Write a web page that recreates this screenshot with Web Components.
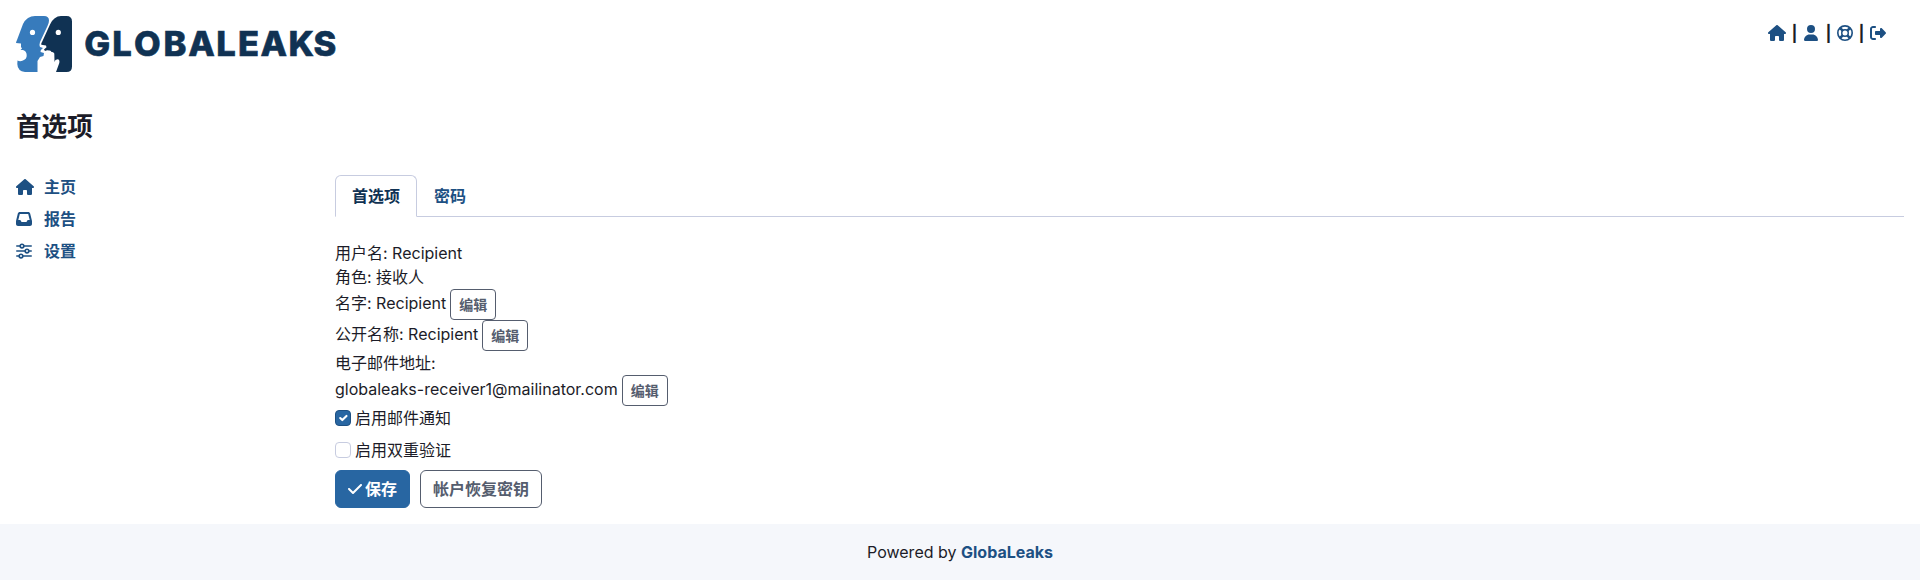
<!DOCTYPE html>
<html lang="zh-CN">
<head>
<meta charset="utf-8">
<title>GlobaLeaks</title>
<style>
html,body{margin:0;background:#fff}
body{font:400 16px/24px Inter,"Noto Sans CJK SC",sans-serif;color:#1c1c28}
</style>
</head>
<body>
<gl-app></gl-app>
<script>
const define=(name,html)=>customElements.define(name,class extends HTMLElement{
  connectedCallback(){
    if(this.shadowRoot)return;
    const t=document.createElement('template');
    t.innerHTML=typeof html==='function'?html(this):html;
    this.attachShadow({mode:'open'}).append(t.content.cloneNode(true));
  }
});
const ICONS={
 home:['0 0 576 512','<path d="M575.8 255.5c0 18-15 32.1-32 32.1h-32l.7 160.2c0 2.7-.2 5.4-.5 8.1V472c0 22.1-17.9 40-40 40H456c-1.1 0-2.2 0-3.3-.1c-1.4 .1-2.8 .1-4.2 .1H416 392c-22.1 0-40-17.9-40-40V448 384c0-17.7-14.3-32-32-32H256c-17.7 0-32 14.3-32 32v64 24c0 22.1-17.9 40-40 40H160 128.1c-1.5 0-3-.1-4.5-.2c-1.2 .1-2.4 .2-3.6 .2H104c-22.1 0-40-17.9-40-40V360c0-.9 0-1.9 .1-2.8V287.6H32c-18 0-32-14-32-32.1c0-9 3-17 10-24L266.4 8c7-7 15-8 22-8s15 2 21 7L564.8 231.5c8 7 12 15 11 24z"/>'],
 user:['0 0 448 512','<path d="M224 256A128 128 0 1 0 224 0a128 128 0 1 0 0 256zm-45.7 48C79.8 304 0 383.8 0 482.3C0 498.7 13.3 512 29.7 512H418.3c16.4 0 29.7-13.3 29.7-29.7C448 383.8 368.2 304 269.7 304H178.3z"/>'],
 help:['0 0 512 512','<g fill="none" stroke="currentColor"><circle cx="256" cy="256" r="230" stroke-width="52"/><circle cx="256" cy="256" r="104" stroke-width="48"/><path d="M100 100L182 182M412 100L330 182M100 412L182 330M412 412L330 330" stroke-width="84"/></g>'],
 exit:['0 0 512 512','<path d="M377.9 105.9L500.7 228.7c7.2 7.2 11.3 17.1 11.3 27.3s-4.1 20.1-11.3 27.3L377.9 406.1c-6.4 6.4-15 9.9-24 9.9c-18.7 0-33.9-15.2-33.9-33.9l0-62.1-128 0c-17.7 0-32-14.3-32-32l0-64c0-17.7 14.3-32 32-32l128 0 0-62.1c0-18.7 15.2-33.9 33.9-33.9c9 0 17.6 3.6 24 9.9zM160 96L96 96c-17.7 0-32 14.3-32 32l0 256c0 17.7 14.3 32 32 32l64 0c17.7 0 32 14.3 32 32s-14.3 32-32 32l-64 0c-53 0-96-43-96-96L0 128C0 75 43 32 96 32l64 0c17.7 0 32 14.3 32 32s-14.3 32-32 32z"/>'],
 inbox:['0 0 512 512','<path d="M121 32C91.6 32 66 52 58.9 80.5L1.9 308.4C.6 313.5 0 318.7 0 323.9V416c0 35.3 28.7 64 64 64H448c35.3 0 64-28.7 64-64V323.9c0-5.2-.6-10.4-1.9-15.5l-57-227.9C446 52 420.4 32 391 32H121zm0 64H391l48 192H387.8c-12.1 0-23.2 6.8-28.6 17.7l-14.3 28.6c-5.4 10.8-16.5 17.7-28.6 17.7H195.8c-12.1 0-23.2-6.8-28.6-17.7l-14.3-28.6c-5.4-10.8-16.5-17.7-28.6-17.7H73L121 96z"/>'],
 sliders:['0 0 512 512','<g fill="none" stroke="currentColor" stroke-width="52" stroke-linecap="round"><path d="M26 96H130M254 96H486M26 256H290M414 256H486M26 416H98M222 416H486"/><circle cx="192" cy="96" r="58"/><circle cx="352" cy="256" r="58"/><circle cx="160" cy="416" r="58"/></g>'],
 check:['0 0 448 512','<path d="M438.6 105.4c12.5 12.5 12.5 32.8 0 45.3l-256 256c-12.5 12.5-32.8 12.5-45.3 0l-128-128c-12.5-12.5-12.5-32.8 0-45.3s32.8-12.5 45.3 0L160 338.7 393.4 105.4c12.5-12.5 32.8-12.5 45.3 0z"/>']
};
define('gl-icon',el=>{
  const [vb,body]=ICONS[el.getAttribute('name')];
  return `<style>:host{display:inline-flex;flex:none}svg{height:16px;width:${vb.split(' ')[2]/32}px;fill:currentColor;display:block}</style><svg viewBox="${vb}">${body}</svg>`;
});
define('gl-logo',`<style>:host{display:block;width:330px;height:56px}svg{display:block}text{font:800 34.5px Inter,sans-serif;fill:#103253;stroke:#103253;stroke-width:.6}</style>
<svg width="330" height="56" viewBox="0 0 330 56">
<path fill="#377bbc" d="M19 0H28Q33 0 33 4.500Q33 7 31.500 10L24 26Q23 29 24 31L27 32Q24 34 24.500 36L28 37L27.500 40L24 41L21.500 45V56H9Q1.500 55 1.300 48L1.500 44.500Q4 46 7 44.500Q11 43 10.700 39Q10.500 35 7 34H4.500L6 32.500L5 31V27.500L0 27Q0 26 1 24L7 8Q11 0 19 0Z"/>
<path fill="#103253" d="M45 0H50.500Q56 0 56 5.500V50.500Q56 56 50.500 56H40L43.300 47Q44 43.500 41.500 43.300Q39 43.500 38.500 46L38.300 37.500Q37.500 35.500 35.500 36Q35 34 33 34.500Q31 34 29 35L28 33.500L30.500 31.300L30 29.500L25.300 28.800Q25 27 26 26L34 8.500Q38 0 45 0Z"/>
<circle cx="16.500" cy="16.400" r="2.600" fill="#fff"/><circle cx="42.300" cy="16.400" r="2.600" fill="#fff"/>
<text x="68.300 96.200 118 147.400 172.200 200.200 222 244.600 272.400 297.400" y="40.100">GLOBALEAKS</text>
</svg>`);
define('gl-header',`<style>:host{display:flex;justify-content:space-between;align-items:flex-start;padding:16px 34px 0 16px}
nav{display:flex;align-items:center;height:24px;margin-top:5px;color:#1d5083}
::slotted([name=user]){margin:0 2px 0 1px}</style>
<gl-logo></gl-logo><nav><slot></slot></nav>`);
define('gl-sep',`<style>:host{display:block;width:17px;text-align:center;color:#1c1c28;font-weight:700}</style><slot></slot>`);
define('gl-nav-item',el=>`<style>:host{display:flex;align-items:center;height:32px;color:#1d5083;font-weight:600}gl-icon{width:28px}</style><gl-icon name="${el.getAttribute('icon')}"></gl-icon><slot></slot>`);
define('gl-tab',`<style>:host{display:block;box-sizing:border-box;height:42px;padding:8px 16px;border:1px solid transparent;border-radius:6px 6px 0 0;font-weight:600;color:#1d5083;margin-bottom:-1px}
:host([active]){color:#103253;background:#fff;border-color:#c7cce0 #c7cce0 #fff}</style><slot></slot>`);
define('gl-tabs',`<style>:host{display:flex;border-bottom:1px solid #c7cce0}</style><slot></slot>`);
define('gl-button',`<style>:host{display:inline-flex;align-items:center;box-sizing:border-box;height:38px;padding:0 12px;border:1px solid #555d6e;border-radius:6px;color:#555d6e;font-weight:600;line-height:24px;background:#fff;white-space:nowrap}
:host([small]){height:31px;padding:0 8px;font-size:14px;border-radius:4px;margin-left:4px}
:host([primary]){background:#2866a2;border-color:#2866a2;color:#fff}
::slotted(gl-icon){margin-right:3px}</style><slot></slot>`);
define('gl-row',`<style>:host{display:flex;align-items:flex-start;height:24px;white-space:pre}:host([tall]){height:31px;line-height:28px}</style><slot></slot>`);
define('gl-check',`<style>:host{display:flex;align-items:center;height:32px}span{box-sizing:border-box;width:16px;height:16px;border:1px solid #c7cce0;border-radius:4px;margin-right:4px;display:block}
:host([checked]) span{background:#2866a2;border-color:#1d5083}svg{display:none;width:14px;height:14px}:host([checked]) svg{display:block}</style>
<span><svg viewBox="0 0 20 20"><path fill="none" stroke="#fff" stroke-linecap="round" stroke-linejoin="round" stroke-width="3" d="m6 10 3 3 6-6"/></svg></span><slot></slot>`);
define('gl-footer',`<style>:host{display:block;box-sizing:border-box;height:56px;padding-top:16px;background:#f5f7fb;text-align:center}b{font-weight:700;color:#1d5083}</style>Powered by <b>GlobaLeaks</b>`);
define('gl-app',`<style>:host{display:flex;flex-direction:column;height:580px}
h1{font-size:25.6px;line-height:31px;font-weight:600;margin:39px 16px 0}
.cols{display:grid;grid-template-columns:303px 1fr;padding:0 16px;margin-top:33px;flex:1;min-height:0}
aside{margin-top:-4px}
main{padding-left:16px}
.info{padding-top:24px}
.checks{margin-top:-4px}
.actions{display:flex;gap:10px;margin-top:4px}</style>
<gl-header><gl-icon name="home"></gl-icon><gl-sep>|</gl-sep><gl-icon name="user"></gl-icon><gl-sep>|</gl-sep><gl-icon name="help"></gl-icon><gl-sep>|</gl-sep><gl-icon name="exit"></gl-icon></gl-header>
<h1>首选项</h1>
<div class="cols"><aside><gl-nav-item icon="home">主页</gl-nav-item><gl-nav-item icon="inbox">报告</gl-nav-item><gl-nav-item icon="sliders">设置</gl-nav-item></aside>
<main><gl-tabs><gl-tab active>首选项</gl-tab><gl-tab>密码</gl-tab></gl-tabs>
<div class="info"><gl-row>用户名: Recipient</gl-row><gl-row>角色: 接收人</gl-row>
<gl-row tall>名字: Recipient<gl-button small>编辑</gl-button></gl-row>
<gl-row tall>公开名称: Recipient<gl-button small>编辑</gl-button></gl-row>
<gl-row>电子邮件地址:</gl-row>
<gl-row tall>globaleaks-receiver1@mailinator.com<gl-button small>编辑</gl-button></gl-row>
<div class="checks"><gl-check checked>启用邮件通知</gl-check><gl-check>启用双重验证</gl-check></div>
<div class="actions"><gl-button primary><gl-icon name="check"></gl-icon>保存</gl-button><gl-button>帐户恢复密钥</gl-button></div></div>
</main></div>
<gl-footer></gl-footer>`);
</script>
</body>
</html>
